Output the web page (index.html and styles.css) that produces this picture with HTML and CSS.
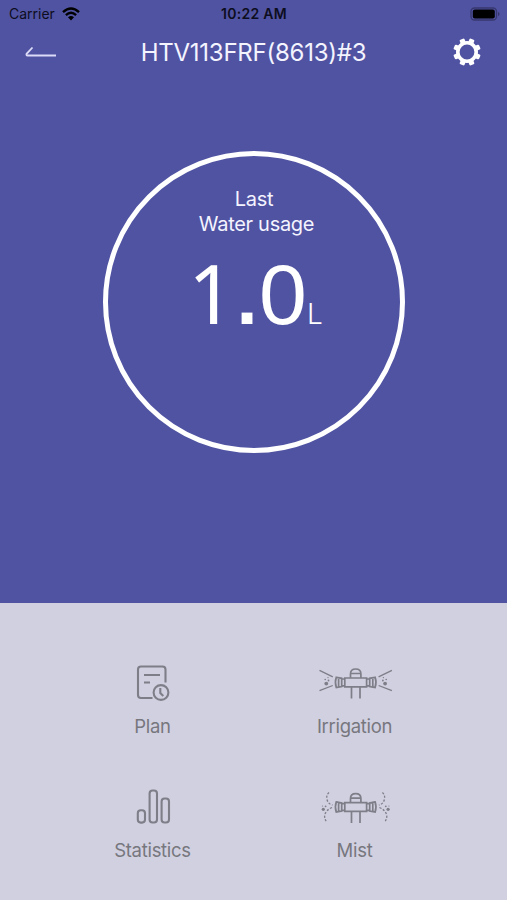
FILE: index.html
```html
<!DOCTYPE HTML>
<html lang="en-US">
<head>
	<meta charset="UTF-8" />
	<title>HTV113FRF(8613)#3</title>
	<link rel="stylesheet" href="styles.css">
</head>
<body>

	<div class="main">
		<div class="status">
			<div class="carrier">
				<span>Carrier</span>
				<svg class="wifi" width="18" height="14" viewBox="0 0 18 14">
					<path d="M1 5.2Q9-2 17 5.2M3.9 8.1Q9 3.6 14.1 8.1" fill="none" stroke="currentColor" stroke-width="2.4" />
					<path d="M6 10.3Q9 7.8 12 10.3L9 13.6Z" fill="currentColor" />
				</svg>
			</div>
			<div class="time">10:22 AM</div>
			<div class="power">
				<svg width="31" height="14" viewBox="0 0 31 14">
					<rect x="2" y="1" width="25.5" height="12" rx="3.5" fill="none" stroke="#37376f" stroke-width="1.3" />
					<rect x="3.8" y="2.6" width="22" height="8.8" rx="2" fill="#000" />
					<path d="M29 5v4q1.6-.6 1.6-2t-1.6-2z" fill="#37376f" />
				</svg>
			</div>
		</div>

		<div class="header">
			<svg class="back" width="32" height="12" viewBox="0 0 32 12">
				<path d="M7.5 1.5L1.6 7.8Q1 9.500 2.5 9.500H31" />
			</svg>
			<h1>HTV113FRF(8613)#3</h1>
			<svg class="gear" width="28" height="28" viewBox="-14 -14 28 28">
				<g fill="#fff">
					<rect id="tooth" x="-2.6" y="-13.8" width="5.2" height="5" rx="1.2" transform="rotate(22.5)" />
					<use href="#tooth" transform="rotate(45)" />
					<use href="#tooth" transform="rotate(90)" />
					<use href="#tooth" transform="rotate(135)" />
					<use href="#tooth" transform="rotate(180)" />
					<use href="#tooth" transform="rotate(225)" />
					<use href="#tooth" transform="rotate(270)" />
					<use href="#tooth" transform="rotate(315)" />
				</g>
				<circle r="9.2" fill="none" stroke="#fff" stroke-width="3.6" />
			</svg>
		</div>

		<div class="ring">
			<div class="caption">Last</div>
			<div class="caption usage">Water usage</div>
			<div class="value">
				<span class="one">1</span>
				<span class="dot">.</span>
				<span class="zero">0</span>
				<span class="unit">L</span>
			</div>
		</div>
	</div>

	<div class="menu">
		<div class="item">
			<svg class="icon bold" viewBox="0 0 80 46">
				<path d="M39.5 39H28q-3 0-3-3V10.500q0-3 3-3h21.500q3 0 3 3V23.500M31 16h16M31 23.500h6" />
				<circle cx="48" cy="33.500" r="7.400" />
				<path d="M47.300 29v5l3 3" />
			</svg>
			<span>Plan</span>
		</div>
		<div class="item">
			<svg class="icon" viewBox="0 0 80 46">
				<g id="sprinkler">
					<path d="M29.800 19h21.800v8.800h-21.800zM35.500 19v-4q0-5 5.200-5t5.200 5v4M35.500 14.500h10.400M36.500 28v11.500M45 28v11.500" />
					<path id="nozzle" d="M21.300 18.300l5.400 1v8.200l-5.400 1q-1.800-5.100 0-10.200zM23.600 19v8.800M26.700 20h3.100M26.700 26.800h3.100" />
					<use href="#nozzle" transform="translate(81.400 0) scale(-1 1)" />
				</g>
				<g id="spray">
					<path class="thin" d="M4.500 11.300l13.300 6.600M4.500 31.700l13.300-5.200" />
					<circle class="drop" cx="11.300" cy="24.600" r="1.900" />
					<circle class="drop" cx="13.500" cy="21.500" r=".9" />
					<circle class="drop" cx="10.200" cy="20.500" r=".8" />
					<circle class="drop" cx="13" cy="18.600" r=".7" />
				</g>
				<use href="#spray" transform="translate(81.400 0) scale(-1 1)" />
			</svg>
			<span>Irrigation</span>
		</div>
		<div class="item">
			<svg class="icon bold" viewBox="0 0 80 46">
				<rect x="24.800" y="27.300" width="7.200" height="12.300" rx="3" />
				<rect x="36.600" y="7.500" width="7.400" height="32" rx="3" />
				<rect x="48.600" y="15.500" width="7.400" height="24" rx="3" />
			</svg>
			<span>Statistics</span>
		</div>
		<div class="item">
			<svg class="icon" viewBox="0 0 80 46">
				<use href="#sprinkler" transform="translate(0 .600)" />
				<g id="mist">
					<path class="dashed" d="M14 9.500q-3 2.500-2 7t5.500 5.500M17 24.500q-5 2-6.800 6t1.800 9" />
					<circle class="drop" cx="8.300" cy="26.300" r="1.600" />
					<circle class="drop" cx="10.600" cy="23.300" r=".9" />
					<circle class="drop" cx="7.500" cy="23" r=".6" />
				</g>
				<use href="#mist" transform="translate(81.400 0) scale(-1 1)" />
			</svg>
			<span>Mist</span>
		</div>
	</div>

</body>
</html>
```

FILE: styles.css
```css
* {
	box-sizing: border-box;
	margin: 0;
	padding: 0;
}
body {
	background-color: #d1d0e1;
	font-family: Inter, "Liberation Sans", sans-serif;
	height: 900px;
	width: 507px;
}
svg {
	display: block;
}
.main {
	background-color: #5053a2;
	color: #f4f4ff;
	height: 603px;
}
.status {
	align-items: center;
	color: #0d0d20;
	display: grid;
	font-size: 14px;
	grid-template-columns: 1fr auto 1fr;
	height: 27px;
	padding: 0 7px 0 9px;
}
.carrier {
	align-items: center;
	display: flex;
	gap: 7px;
}
.wifi {
	color: #000;
}
.time {
	font-weight: 600;
	letter-spacing: .3px;
	margin-right: 1px;
}
.power {
	justify-self: end;
}
.header {
	align-items: center;
	display: grid;
	grid-template-columns: 60px 1fr 60px;
	height: 50px;
	padding: 0 12px;
}
.back {
	fill: none;
	margin-left: 13px;
	stroke: #dcdcf8;
	stroke-width: 1.8;
}
h1 {
	font-size: 24px;
	font-weight: 400;
	letter-spacing: -.25px;
	padding-top: 1px;
	text-align: center;
}
.gear {
	margin-left: 18px;
}
.ring {
	border: 5px solid #fff;
	border-radius: 50%;
	height: 302px;
	margin: 74px 0 0 103px;
	padding-top: 31px;
	text-align: center;
	width: 302px;
}
.caption {
	font-size: 20px;
	font-weight: 400;
	letter-spacing: -.3px;
	line-height: 25px;
}
.usage {
	padding-left: 5px;
}
.value {
	align-items: baseline;
	color: #fff;
	display: flex;
	font-size: 82px;
	line-height: 100px;
	margin: 5px 0 0 80px;
}
.one {
	font-family: "Noto Sans", sans-serif;
	text-align: left;
	width: 48px;
}
.dot,
.zero {
	font-family: "Liberation Sans", sans-serif;
}
.dot {
	font-size: 76px;
	font-weight: 700;
	width: 22px;
}
.zero {
	font-size: 86px;
	width: 50px;
}
.unit {
	font-size: 28px;
	font-weight: 300;
	margin-left: -1px;
}
.menu {
	color: #77777e;
	display: grid;
	grid-template-columns: 202px 202px;
	grid-template-rows: 124px 124px;
	padding: 56px 0 0 51.5px;
}
.item {
	align-items: center;
	display: flex;
	flex-direction: column;
	font-size: 18.5px;
	gap: 9px;
	letter-spacing: -.3px;
	line-height: 24px;
}
.icon {
	fill: none;
	height: 46px;
	stroke: #7e7e88;
	stroke-width: 1.7;
	width: 80px;
}
.bold {
	stroke-width: 2.1;
}
.thin {
	stroke-width: 1.3;
}
.dashed {
	stroke-dasharray: 2.2 1.6;
	stroke-width: 1.3;
}
.drop {
	fill: #7e7e88;
	stroke: none;
}
```
